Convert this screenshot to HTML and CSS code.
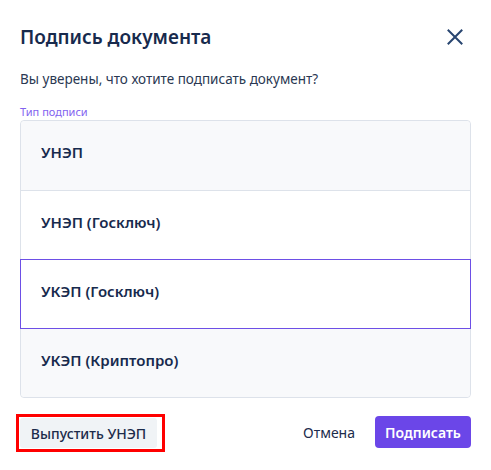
FILE: index.html
```html
<!DOCTYPE html>
<html lang="ru">
<head>
    <meta charset="UTF-8">
    <meta name="viewport" content="width=device-width, initial-scale=1.0">
    <title>Подпись документа</title>
    <link rel="stylesheet" href="styles.css">
</head>
<body>
    <div class="modal">
        <div class="modal-header">
            <h2 class="modal-title">Подпись документа</h2>
            <button class="close-btn" aria-label="Закрыть">
                <svg width="16" height="16" viewBox="0 0 16 16">
                    <path d="M1.5 1.5 L14.5 14.5 M14.5 1.5 L1.5 14.5" stroke="#284570" stroke-width="2" stroke-linecap="square" fill="none"/>
                </svg>
            </button>
        </div>

        <p class="question">Вы уверены, что хотите подписать документ?</p>

        <!-- Тип подписи -->
        <div class="field-label">Тип подписи</div>
        <div class="sign-list">
            <div class="sign-item gray first">УНЭП</div>
            <div class="sign-item">УНЭП (Госключ)</div>
            <div class="sign-item selected">УКЭП (Госключ)</div>
            <div class="sign-item gray after-selected">УКЭП (Криптопро)</div>
        </div>

        <div class="modal-footer">
            <span class="highlight">
                <button class="btn btn-secondary">Выпустить УНЭП</button>
            </span>
            <div class="footer-right">
                <button class="btn btn-link">Отмена</button>
                <button class="btn btn-primary">Подписать</button>
            </div>
        </div>
    </div>
</body>
</html>
```

FILE: styles.css
```css
body {
    font-family: 'Noto Sans', 'Open Sans', sans-serif;
    background: #ffffff;
    color: #1c2b4b;
    margin: 0;
    padding: 0;
}
.modal {
    width: 451px;
    padding: 23px 20px 0 20px;
}
.modal-header {
    display: flex;
    justify-content: space-between;
    align-items: center;
    height: 28px;
}
.modal-title {
    margin: 0;
    font-size: 19px;
    font-weight: 600;
    color: #172a4d;
}
.close-btn {
    border: none;
    background: none;
    padding: 0;
    margin-right: 8px;
    width: 16px;
    height: 16px;
    display: flex;
}
.question {
    margin: 18px 0 0 0;
    font-size: 13.5px;
    line-height: 20px;
    color: #2a3852;
}
.field-label {
    margin-top: 15px;
    font-size: 11px;
    line-height: 16px;
    color: #8262f0;
}
.sign-list {
    margin-top: 0;
    border: 1px solid #dde2ea;
    border-radius: 4px;
}
.sign-item {
    height: 61px;
    display: flex;
    align-items: center;
    padding: 0 0 7px 20px;
    font-size: 15px;
    font-weight: 600;
    color: #172a4d;
    border-top: 1px solid #dde2ea;
    background: #ffffff;
}
.sign-item.gray {
    background: #f8f9fb;
}
.sign-item.first {
    border-top: none;
    height: 62px;
    border-radius: 4px 4px 0 0;
}
.sign-item.selected {
    border: 1px solid #6d4fe6;
    margin: 0 -1px;
}
.sign-item.after-selected {
    border-top: none;
    border-radius: 0 0 4px 4px;
}
.modal-footer {
    display: flex;
    justify-content: space-between;
    align-items: center;
    margin-top: 16px;
    margin-left: -4px;
}
.highlight {
    display: inline-flex;
    border: 3px solid #ff0000;
    padding: 1px 5px 1px 1px;
}
.btn {
    font-family: inherit;
    font-size: 14px;
    border: none;
    cursor: pointer;
}
.btn-secondary {
    height: 30px;
    width: 137px;
    background: #f0f3f6;
    color: #1c2b4b;
    font-weight: 500;
    border-radius: 3px;
    padding: 0;
}
.footer-right {
    display: flex;
    align-items: center;
    gap: 8px;
    margin-top: -2px;
}
.btn-link {
    background: none;
    color: #1c2b4b;
    padding: 0 12px;
    height: 32px;
}
.btn-primary {
    height: 32px;
    width: 96px;
    background: #6b46e8;
    color: #ffffff;
    font-weight: 600;
    border-radius: 4px;
    padding: 0;
}
```
